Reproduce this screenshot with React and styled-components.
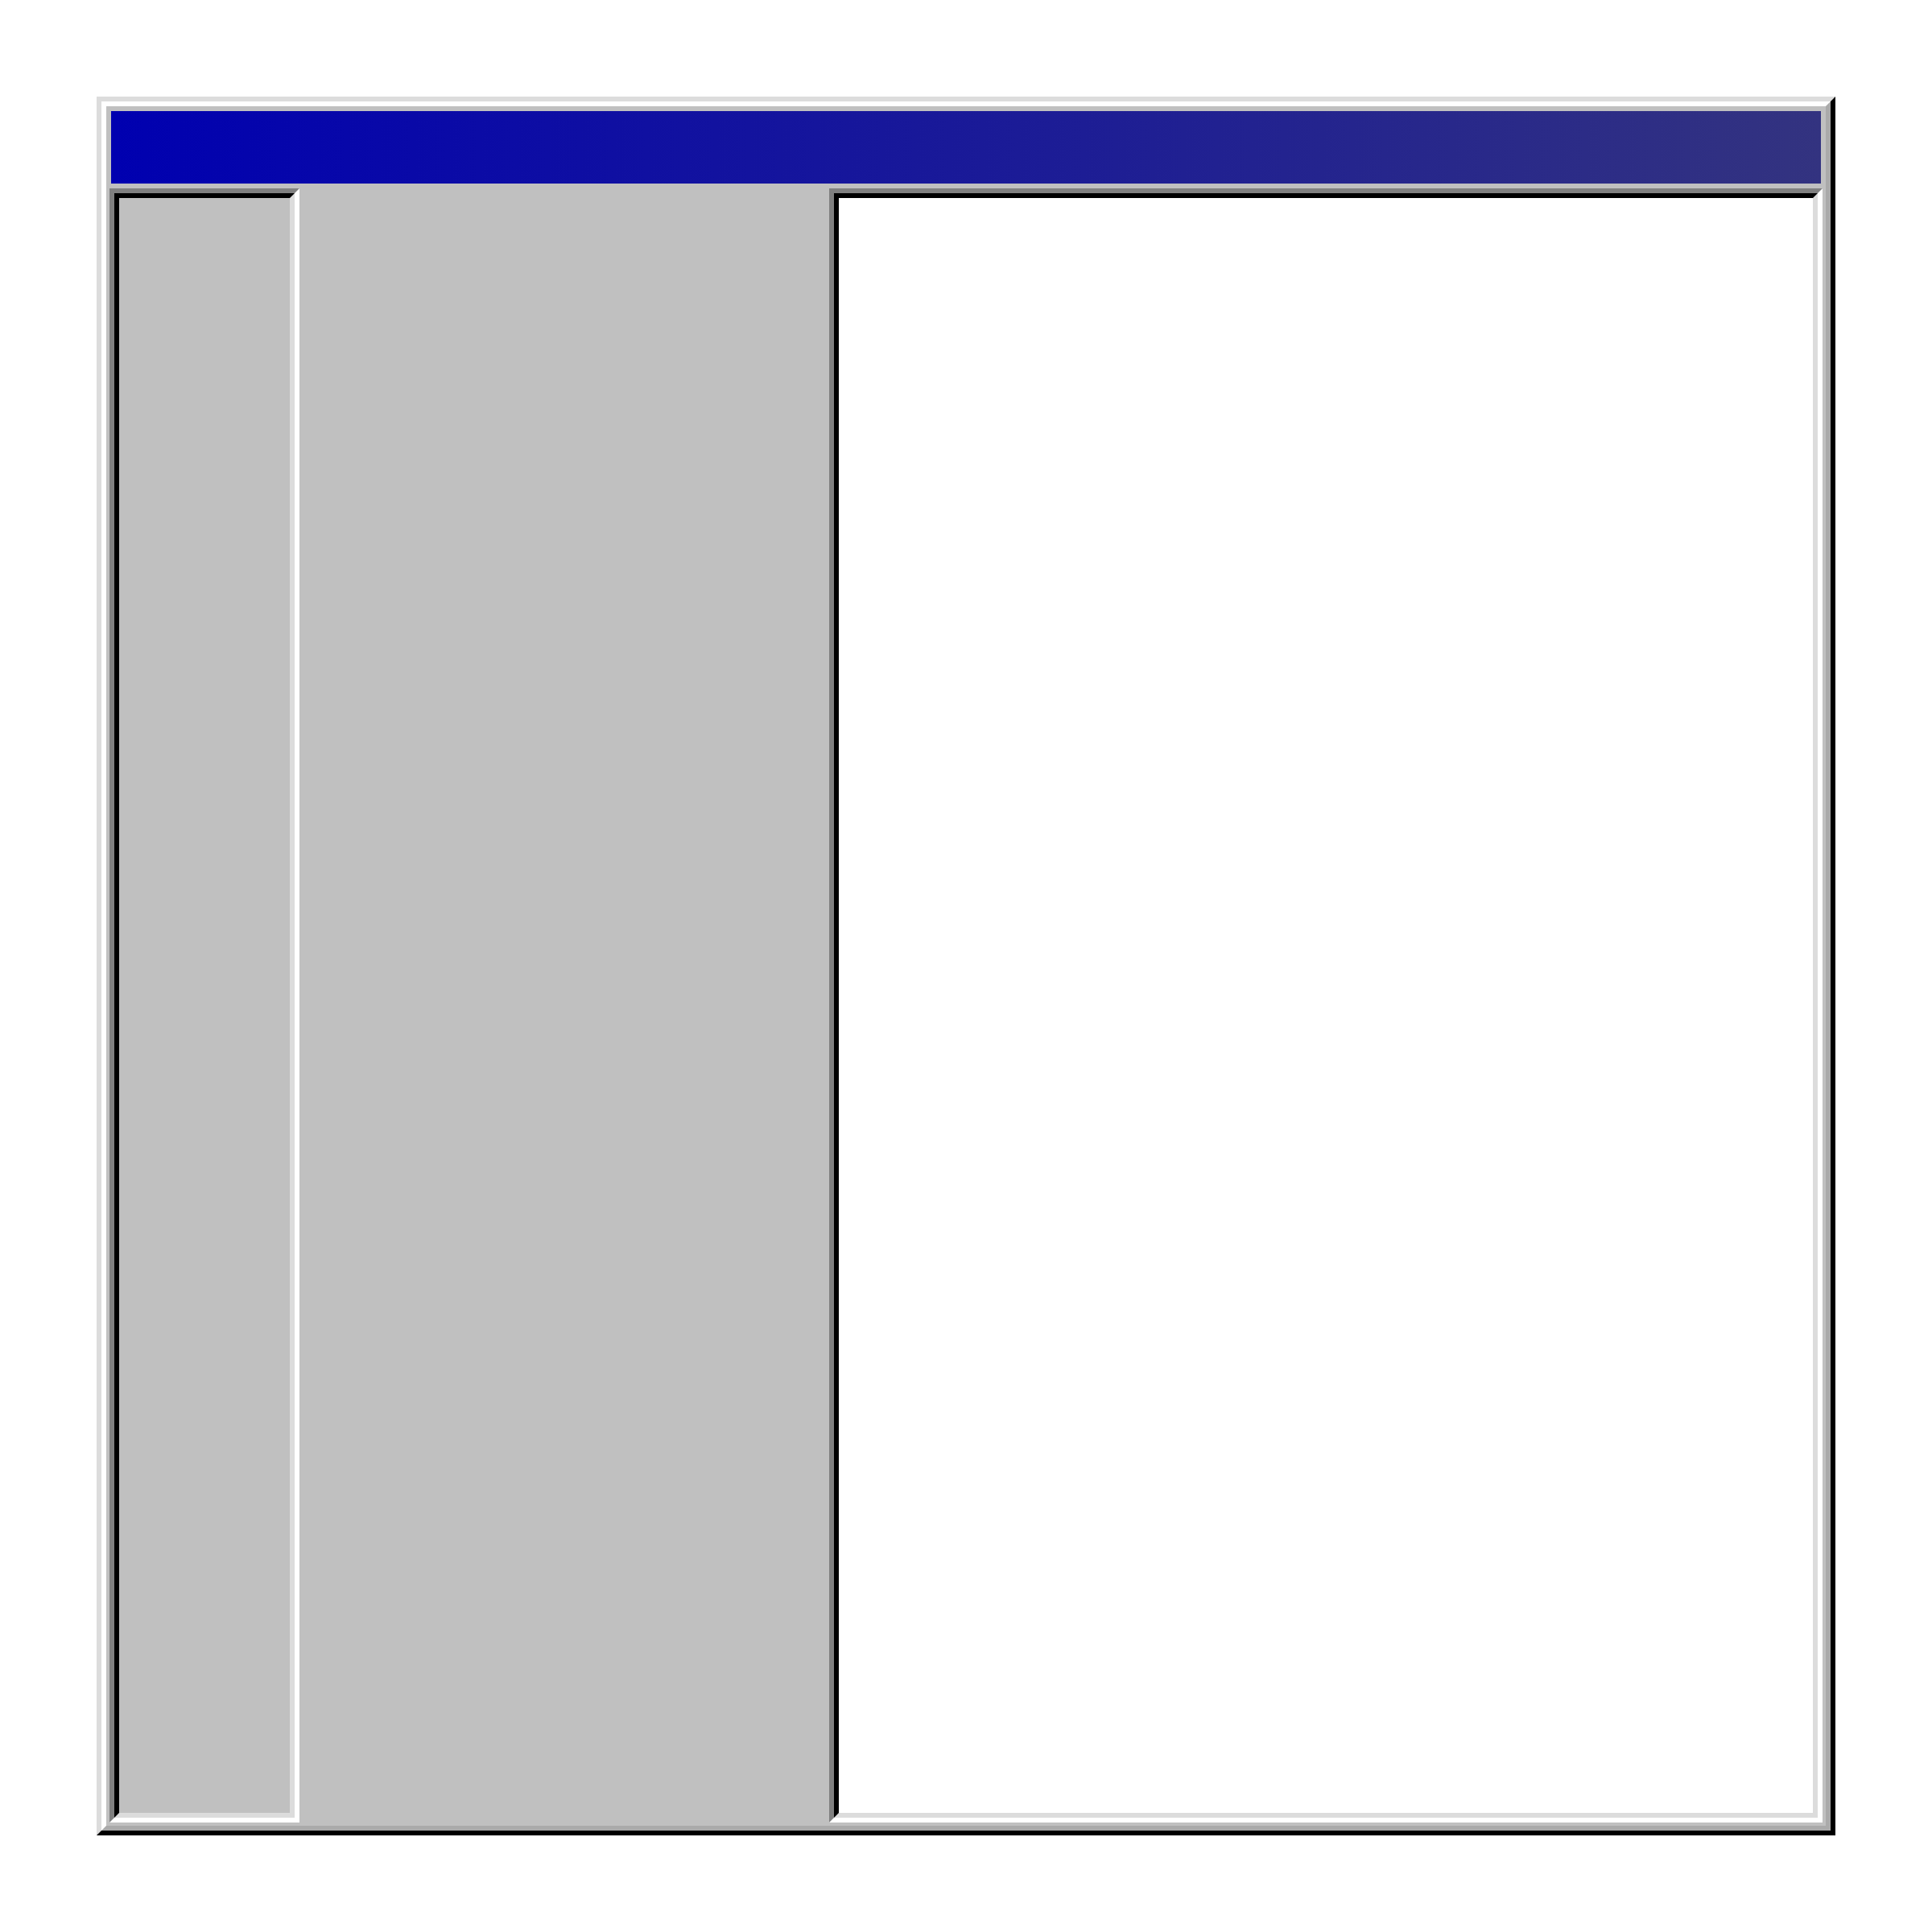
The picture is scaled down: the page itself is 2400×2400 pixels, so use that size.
import styled, { createGlobalStyle } from 'styled-components'

const GlobalStyle = createGlobalStyle`
  html, body {
    margin: 0;
    padding: 0;
    background: #ffffff;
    font-family: "Liberation Sans", Arial, sans-serif;
  }
`

const Page = styled.div`
  padding: 120px;
`

const Bevel = styled.div`
  box-sizing: border-box;
  border-style: solid;
  border-width: 6px;
  border-color: ${p => p.$light} ${p => p.$dark} ${p => p.$dark} ${p => p.$light};
  display: flex;
  flex-direction: column;
  flex: ${p => p.$flex || 'none'};
  width: ${p => p.$width || 'auto'};
  background: ${p => p.$bg || 'transparent'};
`

const Frame = styled(Bevel)`
  width: fit-content;
`

const Window = styled.div`
  width: 2136px;
  height: 2136px;
  background: #c0c0c0;
  display: flex;
  flex-direction: column;
`

const TitleBar = styled.div`
  height: 90px;
  margin: 6px 6px 0 6px;
  background: linear-gradient(to right, #0000b0, #333380);
`

const Body = styled.div`
  flex: 1;
  display: flex;
  padding: 6px 4px 4px 4px;
  gap: 658px;
`

const PanelInner = styled.div`
  flex: 1;
  background: ${p => p.$bg};
`

const SunkenPanel = ({ width, bg, flex }) => (
  <Bevel $light="#808080" $dark="#ffffff" $width={width} $flex={flex}>
    <Bevel $light="#000000" $dark="#dcdcdc" $flex="1">
      <PanelInner $bg={bg} />
    </Bevel>
  </Bevel>
)

const App = () => (
  <>
    <GlobalStyle />
    <Page>
      <Frame $light="#dcdcdc" $dark="#000000">
        <Bevel $light="#ffffff" $dark="#aaaaaa">
          <Window>
            <TitleBar />
            <Body>
              <SunkenPanel width="236px" bg="#c0c0c0" />
              <SunkenPanel flex="1" bg="#ffffff" />
            </Body>
          </Window>
        </Bevel>
      </Frame>
    </Page>
  </>
)

export default App
